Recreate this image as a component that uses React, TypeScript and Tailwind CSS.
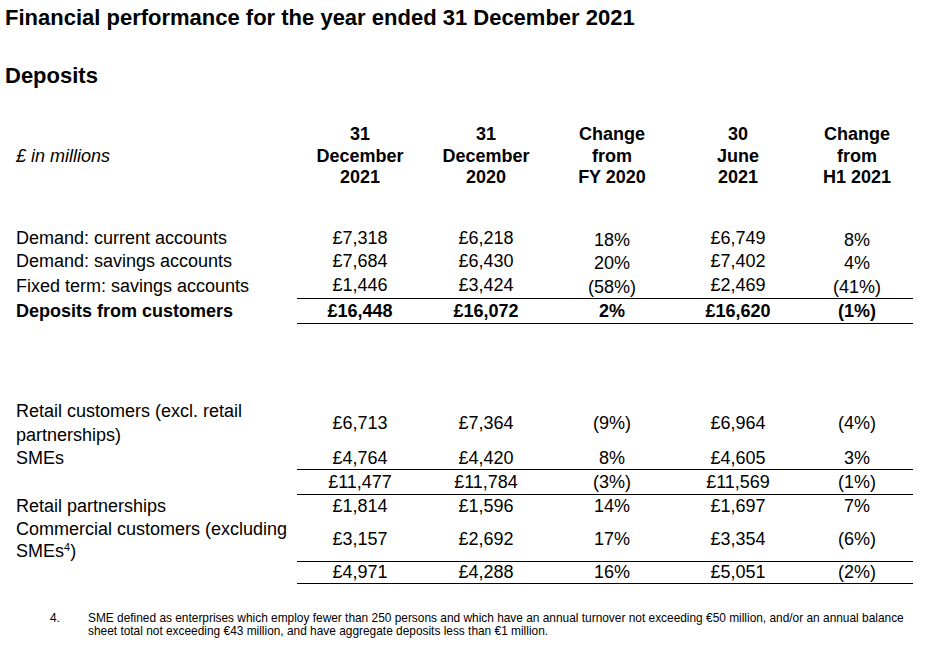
import React from "react";

type RowProps = {
  label: React.ReactNode;
  values: string[];
  h: string;
  bold?: boolean;
  border?: boolean;
  pctShift?: boolean;
  labelClass?: string;
};

const widths = ["w-[126px]", "w-[126px]", "w-[126px]", "w-[126px]", "w-[112px]"];

function Row({ label, values, h, bold, border, pctShift, labelClass }: RowProps) {
  return (
    <div className={`flex ${h} ${bold ? "font-bold" : ""}`}>
      <div className={`w-[281px] flex items-center ${labelClass ?? "leading-[23px]"}`}>
        <div>{label}</div>
      </div>
      <div className={`flex w-[616px] ${border ? "border-b border-black" : ""}`}>
        {values.map((v, i) => (
          <div
            key={i}
            className={`${widths[i]} flex items-center justify-center leading-[23px] ${
              pctShift && (i === 2 || i === 4) ? "pt-[3px]" : ""
            }`}
          >
            {v}
          </div>
        ))}
      </div>
    </div>
  );
}

export default function App() {
  return (
    <div
      className="w-[925px] h-[649px] bg-white text-black overflow-hidden"
      style={{ fontFamily: '"Liberation Sans", Arial, sans-serif' }}
    >
      <div className="pl-[5px] pt-[7px] text-[22px] font-bold leading-[22px]">
        Financial performance for the year ended 31 December 2021
      </div>
      <div className="pl-[5px] mt-[36px] text-[22px] font-bold leading-[22px]">Deposits</div>

      <div className="pl-4 mt-[37px] text-[18px]">
        {/* header */}
        <div className="flex font-bold leading-[21.5px]">
          <div className="w-[281px] flex items-center font-normal italic">£ in millions</div>
          <div className="w-[126px] text-center">
            31<br />December<br />2021
          </div>
          <div className="w-[126px] text-center">
            31<br />December<br />2020
          </div>
          <div className="w-[126px] text-center">
            Change<br />from<br />FY 2020
          </div>
          <div className="w-[126px] text-center">
            30<br />June<br />2021
          </div>
          <div className="w-[112px] text-center">
            Change<br />from<br />H1 2021
          </div>
        </div>

        <div className="mt-[38.5px]">
          <Row
            label="Demand: current accounts"
            values={["£7,318", "£6,218", "18%", "£6,749", "8%"]}
            h="h-[23px]"
            pctShift
          />
          <Row
            label="Demand: savings accounts"
            values={["£7,684", "£6,430", "20%", "£7,402", "4%"]}
            h="h-[23px]"
            pctShift
          />
          <Row
            label="Fixed term: savings accounts"
            values={["£1,446", "£3,424", "(58%)", "£2,469", "(41%)"]}
            h="h-[26px]"
            border
            pctShift
          />
          <Row
            label="Deposits from customers"
            values={["£16,448", "£16,072", "2%", "£16,620", "(1%)"]}
            h="h-[25px]"
            bold
            border
          />
        </div>

        <div className="mt-[75px]">
          <Row
            label={
              <>
                Retail customers (excl. retail
                <br />
                partnerships)
              </>
            }
            labelClass="leading-[24px]"
            values={["£6,713", "£7,364", "(9%)", "£6,964", "(4%)"]}
            h="h-[48px]"
          />
          <Row
            label="SMEs"
            values={["£4,764", "£4,420", "8%", "£4,605", "3%"]}
            h="h-[23px]"
            border
          />
          <Row
            label=""
            values={["£11,477", "£11,784", "(3%)", "£11,569", "(1%)"]}
            h="h-[25px]"
            border
          />
          <Row
            label="Retail partnerships"
            values={["£1,814", "£1,596", "14%", "£1,697", "7%"]}
            h="h-[22px]"
          />
          <Row
            label={
              <>
                Commercial customers (excluding
                <br />
                SMEs<span className="text-[11px] leading-none align-[6px]">4</span>)
              </>
            }
            labelClass="leading-[22px]"
            values={["£3,157", "£2,692", "17%", "£3,354", "(6%)"]}
            h="h-[45px]"
            border
          />
          <Row
            label=""
            values={["£4,971", "£4,288", "16%", "£5,051", "(2%)"]}
            h="h-[22px]"
            border
          />
        </div>
      </div>

      <div className="flex mt-[28px] text-[11.9px] leading-[13px]">
        <div className="w-[88px] pl-[50px]">4.</div>
        <div className="w-[824px]">
          SME defined as enterprises which employ fewer than 250 persons and which have an annual turnover not
          exceeding €50 million, and/or an annual balance sheet total not exceeding €43 million, and have aggregate
          deposits less than €1 million.
        </div>
      </div>
    </div>
  );
}
